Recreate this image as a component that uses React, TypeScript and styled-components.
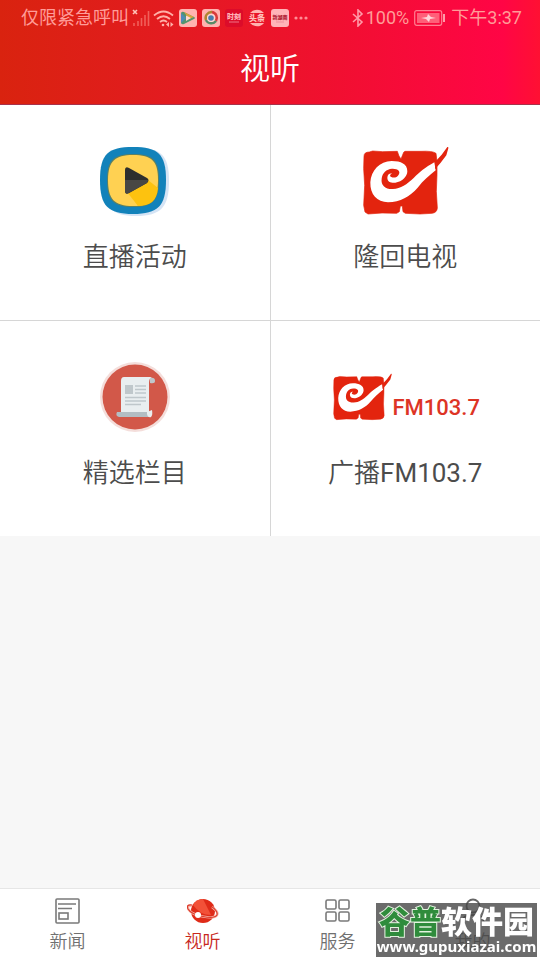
import React from "react";
import styled, { createGlobalStyle } from "styled-components";

const Global = createGlobalStyle`
  * { box-sizing: border-box; }
  body { margin: 0; background: #f7f7f7; font-family: Roboto, "Noto Sans CJK SC", sans-serif; }
  button { font: inherit; border: 0; background: none; padding: 0; cursor: pointer; }
  svg { display: block; flex: none; }
`;

const Page = styled.div`
  min-height: 100vh;
  display: flex;
  flex-direction: column;
`;

const Header = styled.header`
  background: linear-gradient(90deg, #d9230f 0%, #e41a22 35%, #f0102f 60%, #ff0545 93%, #ff1033 100%);
  border-bottom: 1px solid #a8324a;
`;

const StatusBar = styled.div`
  height: 36px;
  padding: 0 18px 0 21px;
  display: flex;
  align-items: center;
  justify-content: space-between;
  color: #ff9c98;
  font-size: 18px;
  line-height: 36px;
`;

const StatusGroup = styled.div<{ $gap: number }>`
  display: flex;
  align-items: center;
  gap: ${(p) => p.$gap}px;
  white-space: nowrap;
`;

const Title = styled.h1`
  margin: 0;
  height: 68px;
  line-height: 66px;
  text-align: center;
  font-size: 30px;
  font-weight: 350;
  color: #fff;
`;

const Grid = styled.main`
  display: grid;
  grid-template-columns: 1fr 1fr;
  gap: 1px;
  background: #d6d6d6;
`;

const Tile = styled.button`
  && {
    height: 215px;
    padding: 36px 0 0;
    background: #fff;
    display: flex;
    flex-direction: column;
    align-items: center;
    color: #4c4c4c;
    font-size: 26px;
    line-height: 38px;
    font-weight: 350;
  }
`;

const Art = styled.span`
  height: 80px;
  margin-bottom: 17px;
  display: flex;
  align-items: center;
  justify-content: center;
`;

const Latin = styled.span`
  font-weight: 400;
`;

const Spacer = styled.div`
  flex: 1;
`;

const TabBar = styled.nav`
  height: 72px;
  display: grid;
  grid-template-columns: repeat(4, 1fr);
  background: #fff;
  border-top: 1px solid #e6e6e6;
`;

const Tab = styled.button<{ $active?: boolean }>`
  && {
    display: flex;
    flex-direction: column;
    align-items: center;
    padding-top: 9px;
    gap: 5px;
    font-size: 18px;
    line-height: 26px;
    font-weight: 350;
    color: ${(p) => (p.$active ? "#c8281c" : "#707070")};
  }
`;

const Watermark = styled.aside`
  position: fixed;
  right: 3px;
  bottom: 3px;
  width: 161px;
  height: 54px;
  background: rgba(70, 70, 70, 0.8);
  color: #fff;
  display: flex;
  flex-direction: column;
  align-items: center;
  white-space: nowrap;
`;

const MarkName = styled.div`
  height: 34px;
  font: 900 31px/34px "Noto Sans CJK SC", sans-serif;
`;

const MarkGreen = styled.span`
  color: #2f8c3c;
  -webkit-text-stroke: 2px #e4f3e0;
  paint-order: stroke fill;
`;

const MarkSite = styled.div`
  font: 700 15px/19px "Noto Sans", sans-serif;
`;

const Signal = () => (
  <svg width="18" height="20" viewBox="0 0 18 20" fill="none">
    <path d="M1 2l4 4M5 2l-4 4" stroke="#ffc3b8" strokeWidth="1.600" />
    <path d="M2 18v-3M6 18v-5M9.500 18v-8M13 18V7M16.500 18V3" stroke="#f0605a" strokeWidth="1.600" />
  </svg>
);

const Wifi = () => (
  <svg width="21" height="20" viewBox="0 0 21 20" fill="none" stroke="#ffb0a8" strokeWidth="1.800">
    <path d="M1 7.500Q10.500-.500 20 7.500M4 11Q10.500 5.500 17 11M7 14Q10.500 11 14 14" />
    <circle cx="10" cy="17" r="1.300" fill="#ffb0a8" stroke="none" />
    <path d="M16 14v5l-3-2.500zM17.500 14v5l3-2.500z" fill="#ffb0a8" stroke="none" />
  </svg>
);

const PlayApp = () => (
  <svg width="18" height="18" viewBox="0 0 18 18">
    <rect width="18" height="18" rx="3" fill="#ffb3b0" />
    <path d="M2 4.500Q2 2 5 3l10 5q2 1 0 2L5 15q-3 1-3-1.500z" fill="#55936e" />
    <path d="M2 4v10l5-5z" fill="#4d8bb8" /><path d="M5 3l10 5-5 2z" fill="#d9a43c" />
    <path d="M7 6.500l5 2.500-5 3z" fill="#ffd8cf" />
  </svg>
);

const RingApp = () => (
  <svg width="18" height="18" viewBox="0 0 18 18" fill="none">
    <rect width="18" height="18" rx="3" fill="#ffb3b0" />
    <path d="M4 11a6 6 0 0 1 6-8" stroke="#b0842f" strokeWidth="2.500" />
    <path d="M10 3a6 6 0 0 1 4 9" stroke="#d83b3b" strokeWidth="2.500" />
    <path d="M14 12a6 6 0 0 1-10-1" stroke="#5a8a66" strokeWidth="2.500" />
    <circle cx="9" cy="9" r="4" fill="#ffd9d4" />
    <circle cx="9" cy="9" r="2.800" fill="#477fae" />
  </svg>
);

const AppText = styled.text`
  font-family: "Noto Sans CJK SC", sans-serif;
  font-weight: 900;
`;

const CountyApp = () => (
  <svg width="18" height="18" viewBox="0 0 18 18">
    <rect width="18" height="18" rx="3" fill="#dc0c2a" />
    <AppText x="9" y="10" fontSize="7" textAnchor="middle" fill="#ffb3b8">时刻</AppText>
    <path d="M4 13h10" stroke="#ee7285" />
  </svg>
);

const HeadlineApp = () => (
  <svg width="18" height="18" viewBox="0 0 18 18">
    <path d="M2 4a9 9 0 0 1 14 0zM2 14a9 9 0 0 0 14 0z" fill="#ffb3b0" />
    <AppText x="9" y="12" fontSize="8" textAnchor="middle" fill="#ffc0bd">头条</AppText>
  </svg>
);

const NewsApp = () => (
  <svg width="18" height="18" viewBox="0 0 18 18">
    <rect width="18" height="18" rx="3" fill="#ffb3b8" />
    <AppText x="9" y="10" fontSize="5" textAnchor="middle" fill="#b01c34">新湖南</AppText>
    <path d="M5 13h8" stroke="#ef8f9c" />
  </svg>
);

const Dots = () => (
  <svg width="14" height="4" viewBox="0 0 14 4" fill="#ff8d95">
    <circle cx="2" cy="2" r="1.600" /><circle cx="7" cy="2" r="1.600" /><circle cx="12" cy="2" r="1.600" />
  </svg>
);

const Bluetooth = () => (
  <svg width="12" height="18" viewBox="0 0 12 18" fill="none" stroke="#ff9aa8" strokeWidth="1.600">
    <path d="M1 5l9 8-4 4V1l4 4-9 8" />
  </svg>
);

const Battery = () => (
  <svg width="32" height="16" viewBox="0 0 32 16">
    <rect x=".7" y=".7" width="27" height="14.600" rx="2" fill="none" stroke="#ff7f92" strokeWidth="1.200" />
    <rect x="3" y="3" width="22.500" height="10" fill="#ff5f79" />
    <path d="M7 8l6-1 1-3 3 3 5 1-6 1-1 3-3-3z" fill="#ffd5da" />
    <rect x="29" y="4" width="2" height="8" fill="#ff9aa8" />
  </svg>
);

const PlayArt = () => (
  <svg width="72" height="72" viewBox="0 0 72 72">
    <path d="M37 3C62 3 70 10 70 36S62 71 37 71 4 62 4 36 12 3 37 3z" fill="#d5e4f5" />
    <path d="M34 2C59 2 67 9 67 35S59 69 34 69 1 61 1 35 9 2 34 2z" fill="#1282ba" />
    <path d="M34 9C54 9 60 15 60 35S54 62 34 62 8 55 8 35 15 9 34 9z" fill="#5b8065" />
    <path d="M34 10C53 10 59 16 59 35S53 61 34 61 9 54 9 35 16 10 34 10z" fill="#ffd152" />
    <path d="M28 47l21-12 10 8C58 56 51 61 39 61z" fill="#fdc20f" />
    <path d="M26 25q0-4 4-2l18 10q3 2 0 5L30 48q-4 2-4-2z" fill="#2e2e2d" />
    <path d="M26 35h23q0 1-1 3L30 48q-4 2-4-2z" fill="#484744" />
  </svg>
);

const SealArt = ({ width }: { width: number }) => (
  <svg width={width} height={Math.round((width * 70) / 90)} viewBox="67 35 270 210">
    <path d="M79 66q0-13 16-13l10-3 30 2 44-1 5 14 6 9 8-20 4-3 48 0q34-2 45 6l3 24 0 40-2 50 3 50q-1 14-16 16l-36 2-44-2-7-5-2-17-6 0-3 17-8 5-44-1-42 3-9-6-4-20 3-60-3-50z" fill="#e3240e" stroke="#e3240e" strokeWidth="2" strokeLinejoin="round" />
    <path d="M290 84C262 100 246 113 228 131C208 150 189 163 166 164C143 165 129 153 132 133C134 116 146 104 163 103C180 102 190 111 183 121C179 129 168 132 161 128C155 125 157 119 163 118C156 116 149 121 149 130C149 142 159 146 173 145C194 143 209 126 209 111C209 89 190 80 162 80C126 81 100 108 98 144C97 181 118 203 151 204C188 203 216 187 240 160C257 138 274 124 294 108Z" fill="#fff" />
    <path d="M292 83l20-22 17-23q4-1 3 4l-6 21-17 22-17 20z" fill="#e3240e" />
  </svg>
);

const ScrollArt = () => (
  <svg width="72" height="72" viewBox="0 0 72 72">
    <circle cx="36" cy="36" r="35" fill="#f4dedb" />
    <circle cx="36" cy="36" r="32.500" fill="#d25849" />
    <path d="M51 17q5-1 5 3 0 3-5 2z" fill="#bfc7cb" />
    <path d="M25 16h28q-3 1-3 6v33H22V20q0-4 3-4z" fill="#e9eef0" />
    <path d="M18 51h31q1 5 4 5H20q-4-1-2-5z" fill="#b3bdc3" />
    <path d="M48 51v2q1 4 4 3 2-2 1-7z" fill="#e9eef0" />
    <rect x="26" y="24" width="8" height="9" fill="#bfc7cb" />
    <path d="M36 25h11M36 28.500h11M36 32h11M26 36.500h21M26 40h21M26 43.500h16" stroke="#bfc7cb" strokeWidth="1.500" />
  </svg>
);

const RadioArt = styled.span`
  display: flex;
  align-items: flex-end;
  color: #dd3425;
  font-size: 22px;
  line-height: 26px;
  font-weight: 500;
`;

const NewsIcon = () => (
  <svg width="26" height="26" viewBox="0 0 26 26" fill="none" stroke="#7a7a7a" strokeWidth="1.600">
    <rect x="1" y="1" width="23" height="24" rx="1" />
    <path d="M3 6h18M3 10.500h14" /><rect x="4" y="15" width="9" height="6" />
  </svg>
);

const PlanetIcon = () => (
  <svg width="32" height="26" viewBox="0 0 32 26">
    <circle cx="16" cy="13" r="12" fill="#df2b18" />
    <path d="M6 7Q9 1 16 1l8 16Q13 17 6 7z" fill="#f25138" />
    <path d="M5 8Q-1 7 2 12c4 6 25 10 28 5q2-3-5-8" fill="none" stroke="#f8b8aa" strokeWidth="2.500" />
    <path d="M5 7Q-1 6 1 11c4 7 26 11 29 6q1-4-5-8" fill="none" stroke="#dc3b2c" strokeWidth="1.200" />
    <circle cx="11" cy="17" r="3" fill="#fff" />
  </svg>
);

const ServiceIcon = () => (
  <svg width="26" height="26" viewBox="0 0 26 26" fill="none" stroke="#7a7a7a" strokeWidth="1.600">
    <rect x="1" y="2" width="10" height="9" rx="1.500" /><rect x="14" y="2" width="10" height="9" rx="1.500" />
    <rect x="1" y="14" width="10" height="9" rx="1.500" /><rect x="14" y="14" width="10" height="9" rx="1.500" />
  </svg>
);

const PersonIcon = () => (
  <svg width="26" height="26" viewBox="0 0 26 26" fill="none" stroke="#666" strokeWidth="1.800">
    <circle cx="13" cy="8" r="6.500" /><path d="M2 25q0-8 11-8t11 8" />
  </svg>
);

export default function App() {
  return (
    <Page>
      <Global />
      <Header>
        <StatusBar>
          <StatusGroup $gap={5}>
            <StatusGroup $gap={3}><span>仅限紧急呼叫</span><Signal /><Wifi /></StatusGroup>
            <PlayApp /><RingApp /><CountyApp /><HeadlineApp /><NewsApp /><Dots />
          </StatusGroup>
          <StatusGroup $gap={5}>
            <StatusGroup $gap={2}><Bluetooth /><span>100%</span></StatusGroup>
            <Battery /><span>下午3:37</span>
          </StatusGroup>
        </StatusBar>
        <Title>视听</Title>
      </Header>
      <Grid>
        <Tile><Art><PlayArt /></Art>直播活动</Tile>
        <Tile><Art><SealArt width={90} /></Art>隆回电视</Tile>
        <Tile><Art><ScrollArt /></Art>精选栏目</Tile>
        <Tile><Art><RadioArt><SealArt width={62} />FM103.7</RadioArt></Art><span>广播<Latin>FM103.7</Latin></span></Tile>
      </Grid>
      <Spacer />
      <TabBar>
        <Tab><NewsIcon />新闻</Tab>
        <Tab $active aria-current="page"><PlanetIcon />视听</Tab>
        <Tab><ServiceIcon />服务</Tab>
        <Tab><PersonIcon />我的</Tab>
      </TabBar>
      <Watermark>
        <MarkName><MarkGreen>谷普</MarkGreen>软件园</MarkName>
        <MarkSite>www.gupuxiazai.com</MarkSite>
      </Watermark>
    </Page>
  );
}
